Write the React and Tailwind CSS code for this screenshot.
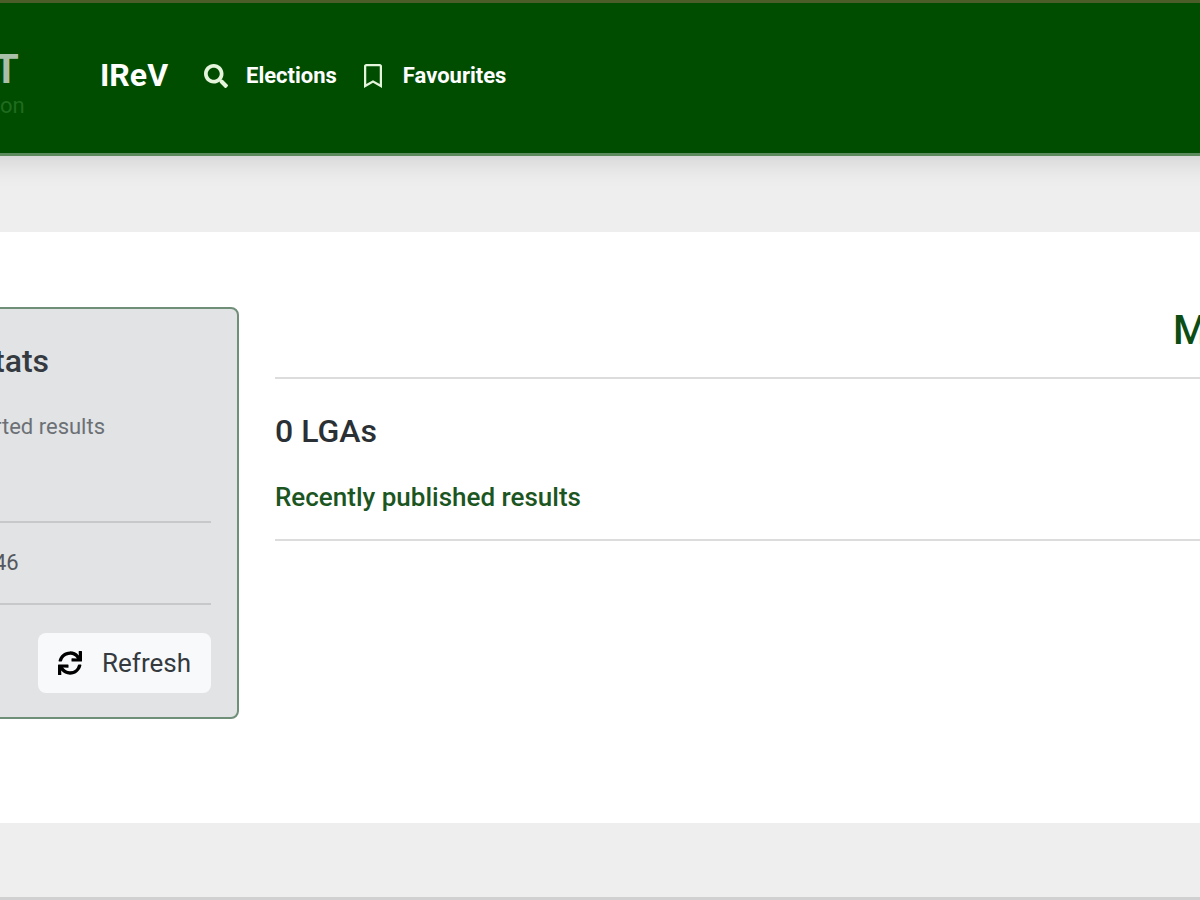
import { FaRegBookmark, FaSearch, FaSync } from 'react-icons/fa';

const navLinks = [
  { icon: FaSearch, label: 'Elections' },
  { icon: FaRegBookmark, label: 'Favourites' },
];

function Header() {
  return (
    <header className="-mx-8 flex h-39 items-center border-t-3 border-b-3 border-t-[#4b5d29] border-b-[#5c8a5c] bg-[#004d00] px-8 shadow-[0_2px_28px_rgba(0,0,0,0.16)]">
      <a href="#home" className="-ml-2 flex w-27 shrink-0 flex-col pt-4">
        <span className="pl-0.5 text-[40px] leading-10 font-bold text-[#a9bfa9]">T</span>
        <span className="pl-2 text-[22px] leading-8 text-[#1f6b1f]">on</span>
      </a>
      <a href="#irev" className="w-26 shrink-0 pb-1.5 text-[32px] leading-10 font-bold text-white">IReV</a>
      <nav className="flex items-center gap-6 pb-1">
        {navLinks.map(({ icon: Icon, label }) => (
          <a key={label} href={`#${label.toLowerCase()}`} className="flex items-center gap-4.5 text-[22px] leading-8 font-bold text-white">
            <Icon className="h-6 w-auto text-[#e4f5dc]" />
            {label}
          </a>
        ))}
      </nav>
    </header>
  );
}

// runs off the left edge of the page
function StatsCard() {
  return (
    <aside className="-ml-2 w-[247px] shrink-0 rounded-lg border-2 border-[#6f8f78] bg-[#e1e3e5] pr-6.5 pb-6">
      <h2 className="pt-8 text-[32px] leading-10 font-medium text-[#343a40]">tats</h2>
      <p className="pt-7.5 text-[22px] leading-8 text-[#6c7075]">rted results</p>
      <hr className="mt-19.5 border-t-2 border-[#c6c8ca]" />
      <p className="py-6 text-[22px] leading-8 text-[#55595d]">46</p>
      <hr className="border-t-2 border-[#c6c8ca]" />
      <div className="flex justify-end pt-7">
        <button type="button" className="flex h-15 items-center gap-5 rounded-lg bg-[#f8f9fa] px-5 text-[26px] text-[#343a40]">
          <FaSync className="size-6 text-black" />
          Refresh
        </button>
      </div>
    </aside>
  );
}

export default function App() {
  return (
    <div className="flex min-h-screen flex-col overflow-x-hidden border-b-3 border-[#d0d0d0] bg-[#eeeeee] font-[Roboto,sans-serif]">
      <Header />
      <main className="mt-19 flex items-start gap-9 bg-white pt-[75px] pb-26">
        <StatsCard />
        <section className="min-w-0 flex-1 overflow-hidden">
          <div className="flex justify-end overflow-hidden border-b-2 border-[#dcdcdc] pb-5.5">
            <h1 className="-mr-2 text-[40px] leading-12 font-medium text-[#0b4d14]">M</h1>
          </div>
          <h2 className="pt-8 text-[32px] leading-10 font-medium text-[#2b3035]">0 LGAs</h2>
          <h3 className="border-b-2 border-[#dcdcdc] pt-7.5 pb-6.5 text-[26px] leading-8 font-medium text-[#1b5522]">
            Recently published results
          </h3>
        </section>
      </main>
    </div>
  );
}
